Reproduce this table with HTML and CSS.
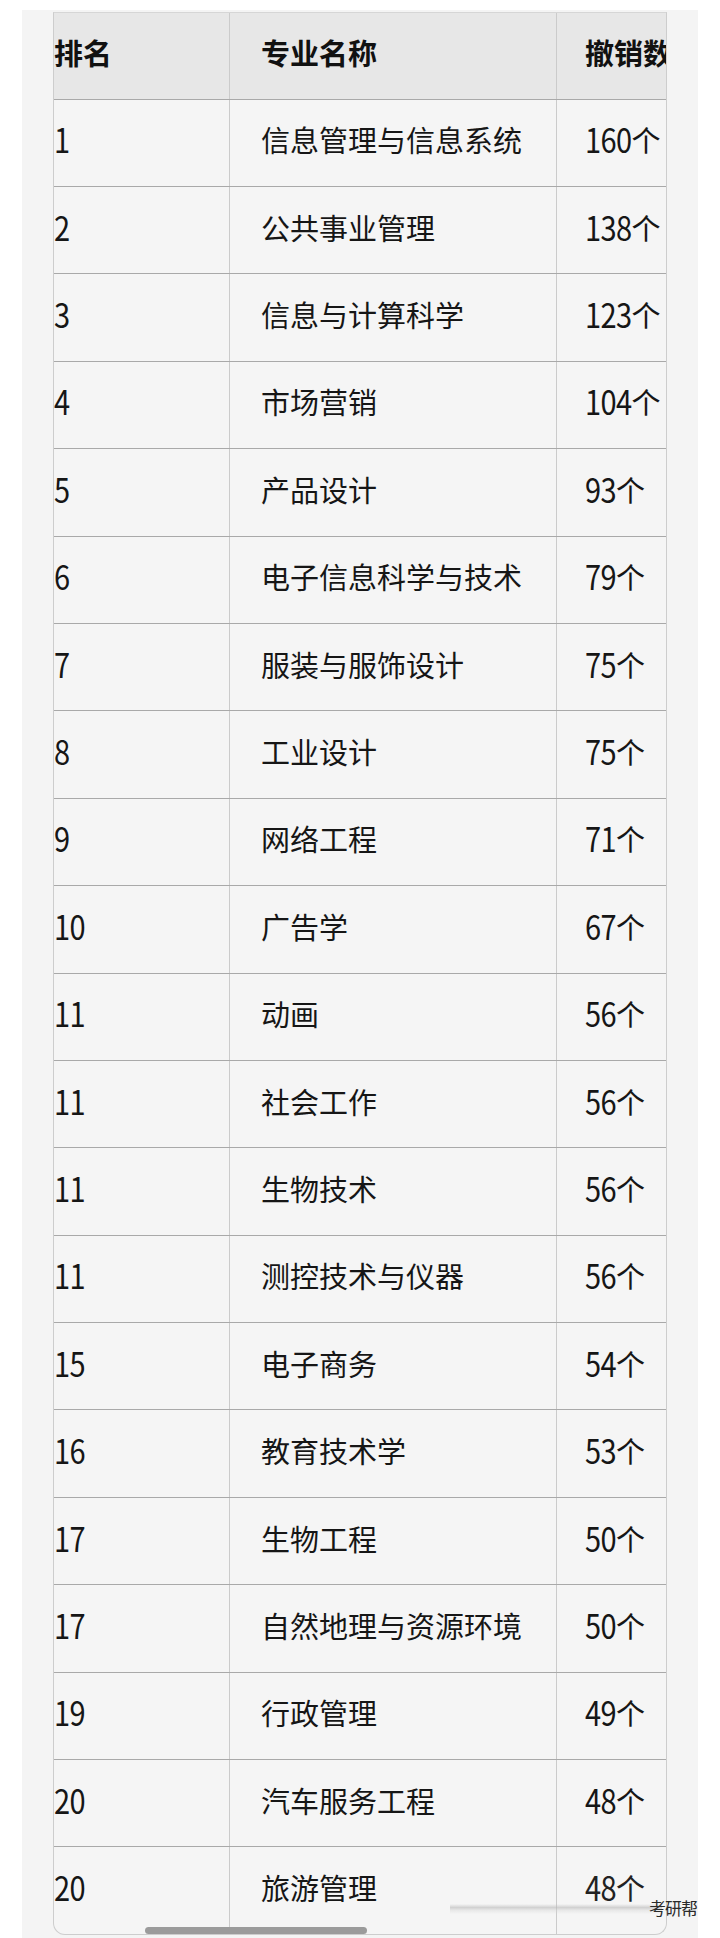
FILE: index.html
```html
<!DOCTYPE html>
<html lang="zh-CN">
<head>
<meta charset="utf-8">
<title>专业撤销排名</title>
<link rel="stylesheet" href="styles.css">
</head>
<body>
<div class="page">
  <div class="table">
    <div class="row head">
      <div class="c c1">排名</div>
      <div class="c c2">专业名称</div>
      <div class="c c3">撤销数量</div>
    </div>
    <div class="row"><div class="c c1"><span class="n">1</span></div><div class="c c2">信息管理与信息系统</div><div class="c c3"><span class="n">160</span>个</div></div>
    <div class="row"><div class="c c1"><span class="n">2</span></div><div class="c c2">公共事业管理</div><div class="c c3"><span class="n">138</span>个</div></div>
    <div class="row"><div class="c c1"><span class="n">3</span></div><div class="c c2">信息与计算科学</div><div class="c c3"><span class="n">123</span>个</div></div>
    <div class="row"><div class="c c1"><span class="n">4</span></div><div class="c c2">市场营销</div><div class="c c3"><span class="n">104</span>个</div></div>
    <div class="row"><div class="c c1"><span class="n">5</span></div><div class="c c2">产品设计</div><div class="c c3"><span class="n">93</span>个</div></div>
    <div class="row"><div class="c c1"><span class="n">6</span></div><div class="c c2">电子信息科学与技术</div><div class="c c3"><span class="n">79</span>个</div></div>
    <div class="row"><div class="c c1"><span class="n">7</span></div><div class="c c2">服装与服饰设计</div><div class="c c3"><span class="n">75</span>个</div></div>
    <div class="row"><div class="c c1"><span class="n">8</span></div><div class="c c2">工业设计</div><div class="c c3"><span class="n">75</span>个</div></div>
    <div class="row"><div class="c c1"><span class="n">9</span></div><div class="c c2">网络工程</div><div class="c c3"><span class="n">71</span>个</div></div>
    <div class="row"><div class="c c1"><span class="n">10</span></div><div class="c c2">广告学</div><div class="c c3"><span class="n">67</span>个</div></div>
    <div class="row"><div class="c c1"><span class="n">11</span></div><div class="c c2">动画</div><div class="c c3"><span class="n">56</span>个</div></div>
    <div class="row"><div class="c c1"><span class="n">11</span></div><div class="c c2">社会工作</div><div class="c c3"><span class="n">56</span>个</div></div>
    <div class="row"><div class="c c1"><span class="n">11</span></div><div class="c c2">生物技术</div><div class="c c3"><span class="n">56</span>个</div></div>
    <div class="row"><div class="c c1"><span class="n">11</span></div><div class="c c2">测控技术与仪器</div><div class="c c3"><span class="n">56</span>个</div></div>
    <div class="row"><div class="c c1"><span class="n">15</span></div><div class="c c2">电子商务</div><div class="c c3"><span class="n">54</span>个</div></div>
    <div class="row"><div class="c c1"><span class="n">16</span></div><div class="c c2">教育技术学</div><div class="c c3"><span class="n">53</span>个</div></div>
    <div class="row"><div class="c c1"><span class="n">17</span></div><div class="c c2">生物工程</div><div class="c c3"><span class="n">50</span>个</div></div>
    <div class="row"><div class="c c1"><span class="n">17</span></div><div class="c c2">自然地理与资源环境</div><div class="c c3"><span class="n">50</span>个</div></div>
    <div class="row"><div class="c c1"><span class="n">19</span></div><div class="c c2">行政管理</div><div class="c c3"><span class="n">49</span>个</div></div>
    <div class="row"><div class="c c1"><span class="n">20</span></div><div class="c c2">汽车服务工程</div><div class="c c3"><span class="n">48</span>个</div></div>
    <div class="row last"><div class="c c1"><span class="n">20</span></div><div class="c c2">旅游管理</div><div class="c c3"><span class="glitch"><span class="n">48</span>个</span></div></div>
    <div class="scrollbar"></div>
  </div>
  <div class="streak"></div>
  <div class="watermark">考研帮</div>
</div>
</body>
</html>
```

FILE: styles.css
```css
* { box-sizing: border-box; }

html, body {
  margin: 0;
  padding: 0;
  background: #ffffff;
}

body {
  font-family: "Noto Sans CJK SC", "Noto Sans", sans-serif;
  color: #161616;
  width: 720px;
  height: 1938px;
  overflow: hidden;
}

.page {
  position: relative;
  margin: 10px 0 0 22px;
  width: 676px;
  height: 1928px;
  background: #f4f4f4;
  padding: 2px 0 0 31px;
}

.table {
  position: relative;
  width: 614px;
  border: 1px solid #cdcdcd;
  border-top-color: #d6d6d6;
  border-radius: 0 0 12px 12px;
  background: #f5f5f5;
  overflow: hidden;
}

.row {
  display: grid;
  grid-template-columns: 175px 327px 110px;
  height: 87.4px;
  border-bottom: 1px solid #a9a9a9;
}

.row.last {
  border-bottom: none;
  height: 87px;
}

.row.head {
  background: #e7e7e7;
  font-weight: 700;
  color: #111;
  height: 86.6px;
}

.c {
  display: flex;
  align-items: center;
  font-size: 29px;
  line-height: 1;
  padding-bottom: 6px;
  white-space: nowrap;
  overflow: hidden;
}

.c2 {
  border-left: 1px solid #cbcbcb;
  padding-left: 31px;
}

.c3 {
  border-left: 1px solid #cbcbcb;
  padding-left: 28px;
}

.n {
  display: inline-block;
  letter-spacing: -0.6px;
  transform: scaleY(1.16);
  transform-origin: 50% 62%;
}

.glitch {
  display: inline-flex;
  align-items: center;
  color: #222;
}

.scrollbar {
  position: absolute;
  left: 91px;
  bottom: 0px;
  width: 222px;
  height: 7px;
  border-radius: 4px;
  background: #9b9b9b;
}

.streak {
  position: absolute;
  left: 428px;
  top: 1894px;
  width: 212px;
  height: 10px;
  background: linear-gradient(to bottom, rgba(200,200,200,0) 0%, rgba(185,185,185,0.6) 35%, rgba(210,210,210,0.35) 65%, rgba(200,200,200,0) 100%);
}

.watermark {
  position: absolute;
  left: 627px;
  top: 1889px;
  font-size: 17px;
  line-height: 1;
  color: #2a2a2a;
  letter-spacing: -1px;
  white-space: nowrap;
}
```
